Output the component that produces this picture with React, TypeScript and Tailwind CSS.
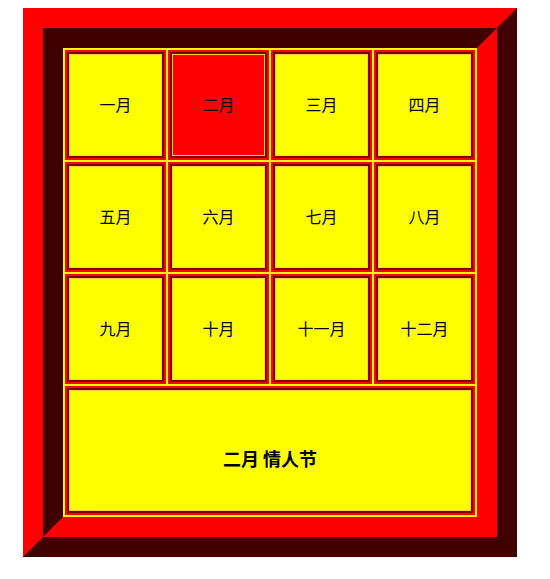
import React from "react";

const MONTHS = ["一月", "二月", "三月", "四月", "五月", "六月", "七月", "八月", "九月", "十月", "十一月", "十二月"];
const ACTIVE = 1;

function Cell({ label, active, big }: { label: string; active?: boolean; big?: boolean }) {
  return (
    <div className={`border-2 border-[#ff0000] ${big ? "col-span-4" : ""}`}>
      <div className="h-full border-2 border-[#800000]">
        <div
          className={`h-full flex items-center justify-center border border-[#ffd040] ${
            active ? "bg-[#ff0000]" : "bg-[#ffff00]"
          } ${big ? "pt-[14px] text-lg font-bold" : "pb-[3px] text-base"}`}
        >
          {label}
        </div>
      </div>
    </div>
  );
}

export default function App() {
  return (
    <main
      className="min-h-screen bg-white pt-2 pl-[23px] text-black"
      style={{ fontFamily: '"Noto Sans CJK SC", "Noto Sans", sans-serif' }}
    >
      {/* outer ridge frame */}
      <div className="w-[494px] border-[20px] border-t-[#ff0000] border-l-[#ff0000] border-r-[#400000] border-b-[#400000]">
        <div className="border-[20px] border-t-[#400000] border-l-[#400000] border-r-[#ff0000] border-b-[#ff0000]">
          <div className="grid grid-cols-4 grid-rows-[110px_110px_110px_129px] gap-[2px] p-[2px] bg-[#ffff00]">
            {MONTHS.map((m, i) => (
              <Cell key={m} label={m} active={i === ACTIVE} />
            ))}
            <Cell label="二月 情人节" big />
          </div>
        </div>
      </div>
    </main>
  );
}
